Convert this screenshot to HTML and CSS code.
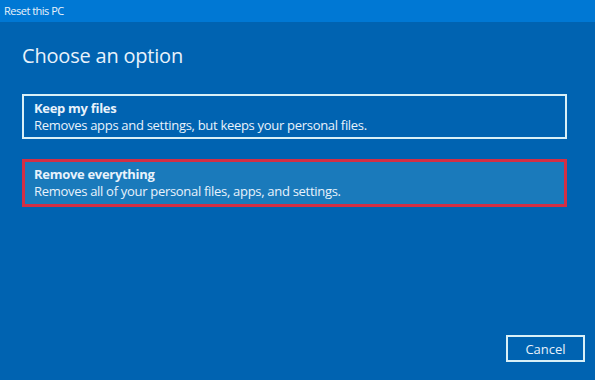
FILE: index.html
```html
<!DOCTYPE html>
<html lang="en">
<head>
  <meta charset="UTF-8">
  <title>Reset this PC</title>
  <link rel="stylesheet" href="styles.css">
</head>
<body>
  <div class="title-bar">Reset this PC</div>

  <main class="content">
    <h1>Choose an option</h1>

    <div class="options">
      <div class="option">
        <div class="option-title">Keep my files</div>
        <div class="option-desc">Removes apps and settings, but keeps your personal files.</div>
      </div>
      <div class="option selected">
        <div class="option-title">Remove everything</div>
        <div class="option-desc">Removes all of your personal files, apps, and settings.</div>
      </div>
    </div>

    <div class="footer">
      <button class="cancel">Cancel</button>
    </div>
  </main>
</body>
</html>
```

FILE: styles.css
```css
html, body {
  height: 100%;
}
body {
  margin: 0;
  font-family: 'Open Sans', 'Noto Sans', sans-serif;
  background-color: #0063b1;
  color: #e8f2fb;
  display: flex;
  flex-direction: column;
  overflow: hidden;
}
.title-bar {
  height: 22px;
  line-height: 22px;
  padding-left: 4px;
  font-size: 11px;
  letter-spacing: -0.5px;
  background-color: #0078d4;
  color: #e8f2fb;
}
.content {
  flex: 1;
  display: flex;
  flex-direction: column;
  padding: 0 28px 18px 22px;
}
h1 {
  margin: 20px 0 0;
  font-size: 20px;
  font-weight: 400;
  line-height: 28px;
  letter-spacing: -0.2px;
}
.options {
  display: flex;
  flex-direction: column;
  gap: 20px;
  margin-top: 24px;
}
.option {
  border: 2px solid #d9f0f7;
  padding: 4px 10px 3px;
  font-size: 13px;
  line-height: 17px;
  letter-spacing: -0.3px;
}
.option.selected {
  border: 3px solid #d32f45;
  padding: 4px 9px 4px;
  background-color: #1a7abb;
}
.option-title {
  font-weight: 700;
}
.footer {
  margin-top: auto;
  display: flex;
  justify-content: flex-end;
  margin-right: -18px;
}
.cancel {
  width: 79px;
  height: 27px;
  background: transparent;
  border: 2px solid #d9f0f7;
  color: #e8f2fb;
  font-family: inherit;
  font-size: 13px;
  cursor: pointer;
}
```
